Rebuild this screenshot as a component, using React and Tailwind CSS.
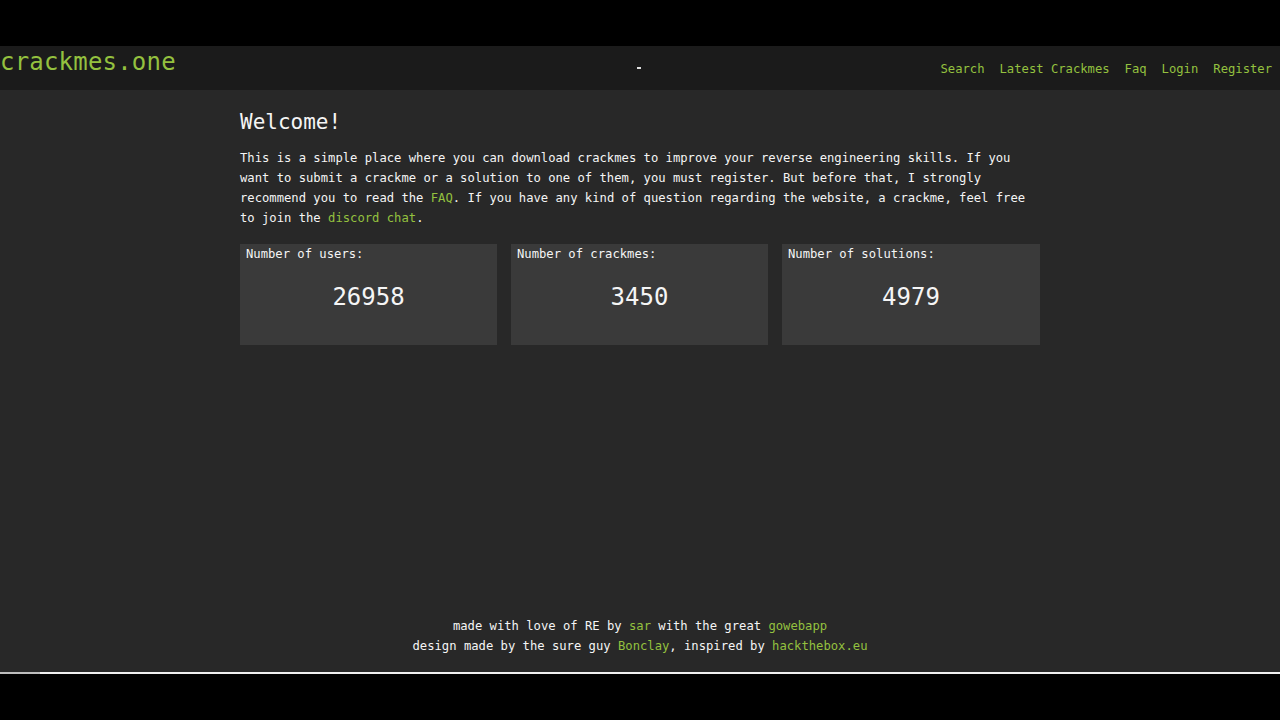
export default function App() {
  const mono = { fontFamily: '"DejaVu Sans Mono", "Liberation Mono", monospace' };
  const green = "text-[#94c13f]";
  return (
    <div className="w-[1280px] h-[720px] bg-black flex flex-col overflow-hidden" style={mono}>
      <div className="h-[46px] bg-black shrink-0" />
      <header className="h-[44px] bg-[#1b1b1b] shrink-0 flex items-start relative">
        <div className={`${green} text-[24px] leading-[30px] pt-[1px] tracking-[0.2px]`}>crackmes.one</div>
        <div className="absolute left-[637px] top-[21px] w-[4px] h-[2px] bg-[#e0e0e0]" />
        <nav className={`ml-auto flex gap-[15px] pr-[8px] pt-[14px] text-[12.2px] leading-[18px] ${green}`}>
          <span>Search</span>
          <span>Latest Crackmes</span>
          <span>Faq</span>
          <span>Login</span>
          <span>Register</span>
        </nav>
      </header>
      <main className="h-[582px] bg-[#282828] shrink-0 flex flex-col text-[#f5f5f5]">
        <div className="w-[800px] mx-auto pt-[18px]">
          <h1 className="text-[21px] leading-[28px]">Welcome!</h1>
          <p className="mt-[12px] text-[12.2px] leading-[20px]">
            This is a simple place where you can download crackmes to improve your reverse engineering skills. If you want to submit a crackme or a solution to one of them, you must register. But before that, I strongly recommend you to read the <span className={green}>FAQ</span>. If you have any kind of question regarding the website, a crackme, feel free to join the <span className={green}>discord chat</span>.
          </p>
          <div className="mt-[16px] grid grid-cols-[257px_257px_258px] gap-[14px]">
            {[
              ["Number of users:", "26958"],
              ["Number of crackmes:", "3450"],
              ["Number of solutions:", "4979"],
            ].map(([l, n]) => (
              <div key={l} className="h-[101px] bg-[#3a3a3a] px-[6px] pt-[2px]">
                <div className="text-[12.2px] leading-[16px]">{l}</div>
                <div className="text-[24px] leading-[30px] text-center mt-[20px]">{n}</div>
              </div>
            ))}
          </div>
        </div>
        <footer className="mt-auto pb-[16px] text-center text-[12.2px] leading-[20px]">
          <div>made with love of RE by <span className={green}>sar</span> with the great <span className={green}>gowebapp</span></div>
          <div>design made by the sure guy <span className={green}>Bonclay</span>, inspired by <span className={green}>hackthebox.eu</span></div>
        </footer>
      </main>
      <div className="h-[2px] bg-[#f0f0f0] shrink-0 flex">
        <div className="w-[40px] bg-[#bdbdbd]" />
      </div>
      <div className="flex-1 bg-black" />
    </div>
  );
}
